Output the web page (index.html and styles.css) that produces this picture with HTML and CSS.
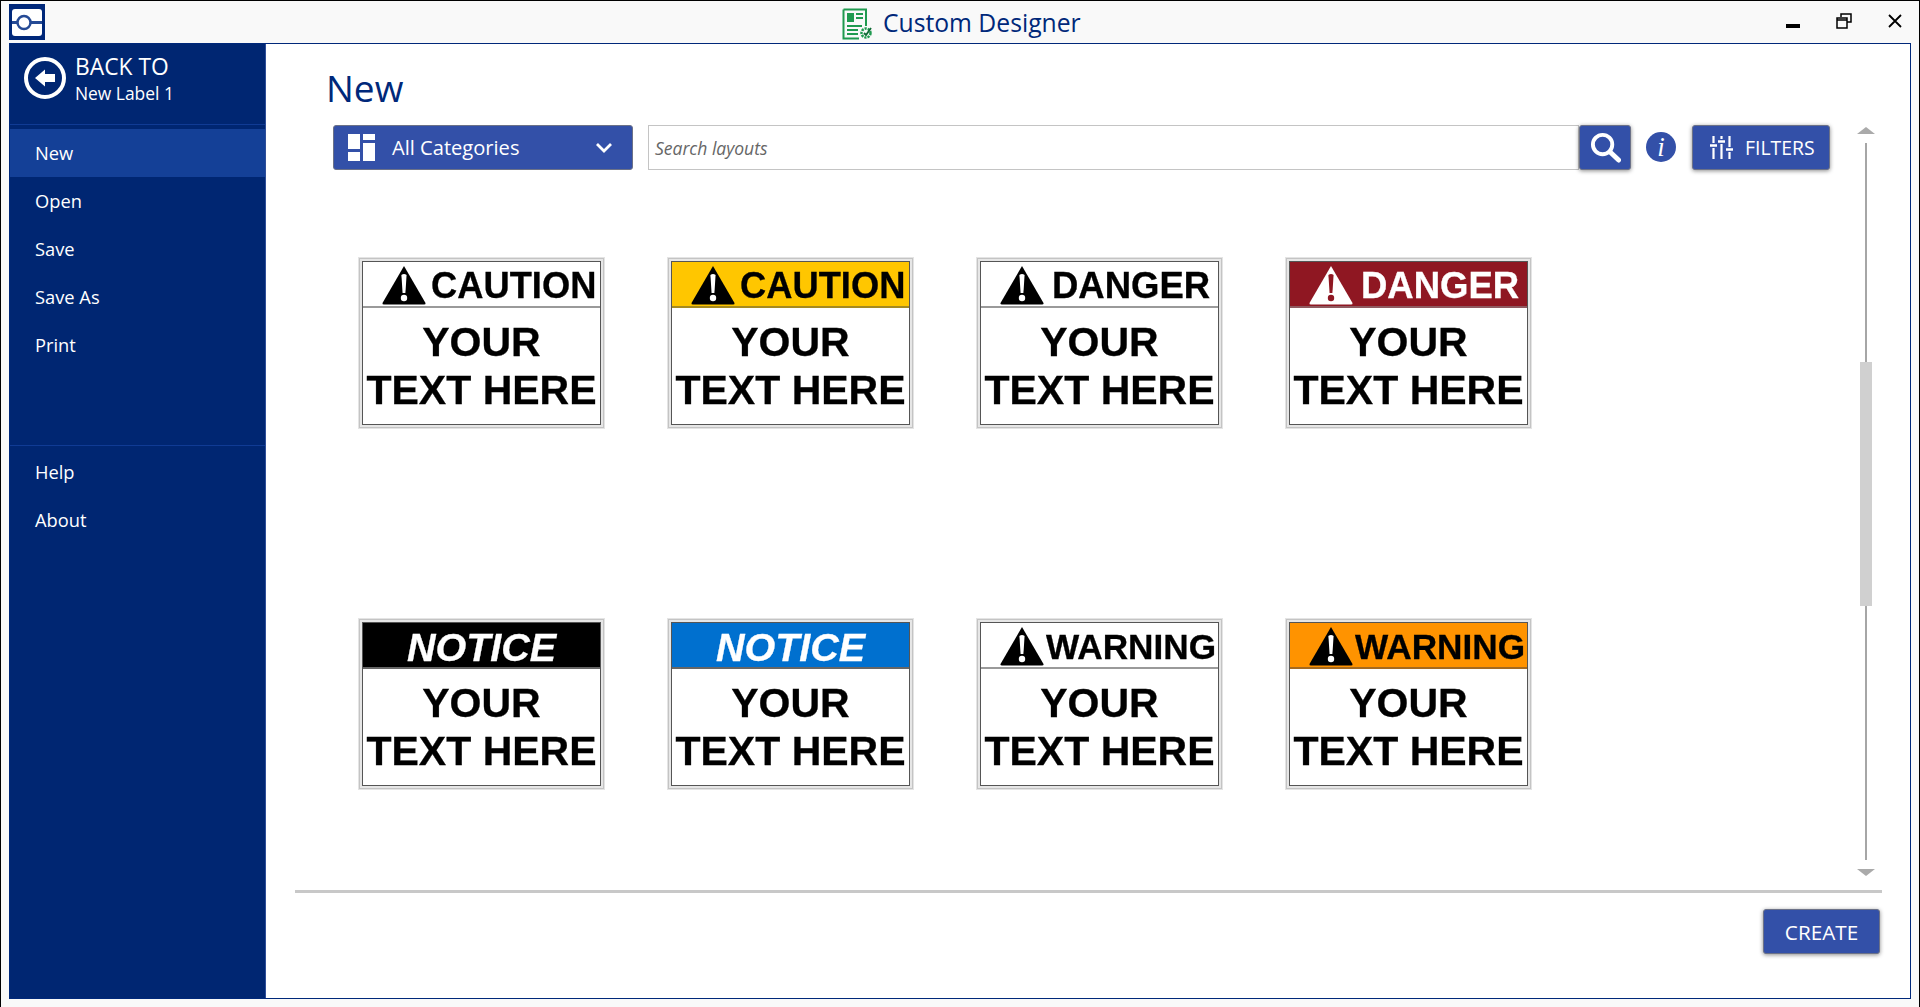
FILE: index.html
```html
<!DOCTYPE html>
<html lang="en">
<head>
<meta charset="utf-8">
<title>Custom Designer</title>
<link rel="stylesheet" href="styles.css">
</head>
<body>
<svg class="defs" width="0" height="0" aria-hidden="true">
  <symbol id="tri" viewBox="0 0 44 40">
    <path class="tri-body" d="M22 1 L43.500 38 Q44 39.500 42 39.500 L2 39.500 Q0 39.500 .5 38 Z"/>
    <path class="tri-mark" d="M19.400 10 Q22 8 24.600 10 L23.400 28 L20.600 28 Z"/>
    <circle class="tri-mark" cx="22" cy="33" r="3.200"/>
  </symbol>
</svg>
<div class="window">
  <header class="titlebar">
    <svg class="logo" viewBox="0 0 36 36">
      <rect width="36" height="36" fill="#00287a"/>
      <rect x="3" y="5" width="30" height="27" rx="3" fill="#fff"/>
      <path d="M3 18.500H33" stroke="#254a95" stroke-width="3"/>
      <circle cx="15" cy="18.500" r="6.500" fill="#fff" stroke="#254a95" stroke-width="2.500"/>
    </svg>
    <div class="title">
      <svg class="title-icon" viewBox="0 0 32 32">
        <path d="M1.500 1.500H24V18M17 30.500H1.500V1.500" fill="none" stroke="#1f9a4f" stroke-width="2"/>
        <rect x="5" y="5" width="7" height="9" fill="#1f9a4f"/>
        <path d="M14 6H21M14 10H21M5 18H20M5 22H16M5 26H16" stroke="#1f9a4f" stroke-width="2"/>
        <circle cx="24" cy="25" r="4.500" fill="none" stroke="#1f9a4f" stroke-width="2.500" stroke-dasharray="2.200 1"/>
        <path d="M22 25L24 27L29 20" fill="none" stroke="#0f6b35" stroke-width="1.800"/>
      </svg>
      <span class="title-text">Custom Designer</span>
    </div>
    <div class="win-controls">
      <svg class="win-btn" viewBox="0 0 16 16"><rect x="1" y="11" width="14" height="4" fill="#000"/></svg>
      <svg class="win-btn" viewBox="0 0 16 16"><path d="M5 4V1H15V9H11M1 5H11V15H1Z M1 7H11" fill="none" stroke="#000" stroke-width="1.500"/></svg>
      <svg class="win-btn" viewBox="0 0 16 16"><path d="M2 2L14 14M14 2L2 14" stroke="#000" stroke-width="1.800"/></svg>
    </div>
  </header>

  <div class="frame">
    <nav class="sidebar">
      <div class="back">
        <svg class="back-icon" viewBox="0 0 42 42">
          <circle cx="21" cy="21" r="19" fill="none" stroke="#fff" stroke-width="4"/>
          <path d="M11 21L21 12.500V17H31V25H21V29.500Z" fill="#fff"/>
        </svg>
        <div class="back-text">
          <div class="back-top">BACK TO</div>
          <div class="back-sub">New Label 1</div>
        </div>
      </div>
      <ul class="menu">
        <li class="menu-item selected">New</li>
        <li class="menu-item">Open</li>
        <li class="menu-item">Save</li>
        <li class="menu-item">Save As</li>
        <li class="menu-item">Print</li>
      </ul>
      <ul class="menu menu-lower">
        <li class="menu-item">Help</li>
        <li class="menu-item">About</li>
      </ul>
    </nav>

    <main class="main">
      <div class="upper">
        <div class="content">
          <h1 class="page-title">New</h1>
          <div class="toolbar">
            <div class="btn dropdown">
              <svg class="cat-icon" viewBox="0 0 27 27" fill="#fff">
                <rect width="12" height="15"/><rect x="15" width="12" height="6"/><rect y="18" width="12" height="9"/><rect x="15" y="9" width="12" height="18"/>
              </svg>
              <span class="dropdown-label">All Categories</span>
              <svg class="chev" viewBox="0 0 18 12"><path d="M2 2L9 9L16 2" fill="none" stroke="#fff" stroke-width="2.800"/></svg>
            </div>
            <div class="search">
              <span class="search-text">Search layouts</span>
            </div>
            <div class="btn search-btn">
              <svg class="search-icon" viewBox="0 0 32 32"><circle cx="13" cy="13" r="10" fill="none" stroke="#fff" stroke-width="4"/><path d="M20.500 20.500L29.500 29" stroke="#fff" stroke-width="5" stroke-linecap="round"/></svg>
            </div>
            <div class="info">i</div>
            <div class="btn filters">
              <svg class="filter-icon" viewBox="0 0 23 23">
                <path d="M3.500 0V7M3.500 12V23M11.500 0V3M11.500 8V23M19.500 0V11M19.500 16V23" stroke="#fff" stroke-width="2.200"/>
                <path d="M0 9.500H7M8 5.500H15M16 13.500H23" stroke="#fff" stroke-width="2.400"/>
              </svg>
              <span>FILTERS</span>
            </div>
          </div>
          <div class="grid">
            <div class="card"><div class="sign">
              <div class="sign-head icon-head gap-c"><svg class="tri"><use href="#tri"/></svg><span class="word">CAUTION</span></div>
              <div class="sign-body">YOUR<br>TEXT HERE</div>
            </div></div>
            <div class="card"><div class="sign">
              <div class="sign-head icon-head gap-c yellow"><svg class="tri"><use href="#tri"/></svg><span class="word">CAUTION</span></div>
              <div class="sign-body">YOUR<br>TEXT HERE</div>
            </div></div>
            <div class="card"><div class="sign">
              <div class="sign-head icon-head gap-d"><svg class="tri"><use href="#tri"/></svg><span class="word">DANGER</span></div>
              <div class="sign-body">YOUR<br>TEXT HERE</div>
            </div></div>
            <div class="card"><div class="sign">
              <div class="sign-head icon-head gap-d red"><svg class="tri"><use href="#tri"/></svg><span class="word">DANGER</span></div>
              <div class="sign-body">YOUR<br>TEXT HERE</div>
            </div></div>
            <div class="card"><div class="sign">
              <div class="sign-head notice black"><span class="word">NOTICE</span></div>
              <div class="sign-body">YOUR<br>TEXT HERE</div>
            </div></div>
            <div class="card"><div class="sign">
              <div class="sign-head notice blue"><span class="word">NOTICE</span></div>
              <div class="sign-body">YOUR<br>TEXT HERE</div>
            </div></div>
            <div class="card"><div class="sign">
              <div class="sign-head icon-head gap-w"><svg class="tri"><use href="#tri"/></svg><span class="word">WARNING</span></div>
              <div class="sign-body">YOUR<br>TEXT HERE</div>
            </div></div>
            <div class="card"><div class="sign">
              <div class="sign-head icon-head gap-w orange"><svg class="tri"><use href="#tri"/></svg><span class="word">WARNING</span></div>
              <div class="sign-body">YOUR<br>TEXT HERE</div>
            </div></div>
          </div>
        </div>
        <div class="scrollbar">
          <div class="arrow-up"></div>
          <div class="track"><div class="thumb"></div></div>
          <div class="arrow-down"></div>
        </div>
      </div>
      <div class="rule"></div>
      <div class="footer"><div class="btn create">CREATE</div></div>
    </main>
  </div>
</div>
</body>
</html>
```
FILE: styles.css
```css
* { box-sizing: border-box; }
html, body { margin: 0; padding: 0; height: 100%; }
body { font-family: "Open Sans", "Noto Sans", sans-serif; background: #f9f9f9; overflow: hidden; }
.defs { display: block; width: 0; height: 0; }

.window {
  width: 1920px; height: 1007px;
  display: flex; flex-direction: column;
  border-top: 1px solid #000; border-left: 1px solid #000; border-right: 1px solid #000;
  background: #f9f9f9;
}

.titlebar { height: 42px; display: flex; align-items: center; padding-left: 8px; position: relative; flex: none; }
.logo { width: 36px; height: 36px; display: block; }
.title { position: absolute; left: 841px; top: 6px; display: flex; align-items: center; gap: 9px; }
.title-icon { width: 32px; height: 32px; display: block; }
.title-text { font-size: 24.700px; color: #00287a; line-height: 32px; margin-bottom: 2px; }
.win-controls { margin-left: auto; display: flex; gap: 35px; padding-right: 16px; margin-top: -2px; }
.win-btn { width: 16px; height: 16px; display: block; }

.frame {
  flex: none; width: 1902px; height: 956px; margin-left: 8px;
  border: 1.500px solid #00287a; display: flex; background: #fff;
}
.sidebar { width: 256px; flex: none; background: #002672; border-right: 1px solid #2f4f99; color: #fff; display: flex; flex-direction: column; }
.back { height: 81px; border-bottom: 1px solid #103b94; display: flex; padding: 13px 0 0 14px; gap: 9px; flex: none; }
.back-icon { width: 42px; height: 42px; display: block; flex: none; }
.back-text { margin-top: -4px; }
.back-top { font-size: 22.800px; line-height: 28px; }
.back-sub { font-size: 17.400px; line-height: 24px; margin-top: 0; }
.menu { list-style: none; margin: 4px 0 0; padding: 0; }
.menu-lower { margin-top: 76px; border-top: 1px solid #103b94; padding-top: 2px; }
.menu-item { height: 48px; line-height: 48px; padding-left: 25px; font-size: 18.300px; }
.menu-item.selected { background: #144097; }

.main { flex: 1; min-width: 0; display: flex; flex-direction: column; }
.upper { display: flex; height: 846px; flex: none; }
.content { width: 1568px; padding-left: 60px; flex: none; }
.page-title { margin: 0; font-weight: 400; font-size: 37px; line-height: 50px; color: #00287a; padding-top: 19px; height: 81px; }
.toolbar { display: flex; align-items: stretch; height: 45px; margin-left: 7px; width: 1497px; }
.btn {
  background: #3350a8; color: #fff; border: 1px solid #6c7288; border-radius: 3px;
  display: flex; align-items: center; box-shadow: 0 1px 4px rgba(0,0,0,.45);
}
.dropdown { width: 300px; padding-left: 14px; box-shadow: none; border-width: 1.500px; }
.cat-icon { width: 27px; height: 27px; flex: none; }
.dropdown-label { font-size: 20.100px; margin-left: 17px; }
.chev { width: 18px; height: 12px; margin-left: auto; margin-right: 19px; }
.search { width: 931px; margin-left: 15px; border: 1.500px solid #c4c4c4; display: flex; align-items: center; padding-left: 6px; }
.search-text { font-style: italic; font-size: 17.500px; color: #666; }
.search-btn { width: 52px; justify-content: center; }
.search-icon { width: 31px; height: 31px; }
.info {
  width: 30px; height: 30px; border-radius: 50%; background: #3350a8; color: #fff;
  font: italic 400 27px/30px "Liberation Serif", serif; text-align: center;
  margin: 7px 16px 0 15px; flex: none;
}
.filters { width: 138px; padding-left: 17px; gap: 12px; font-size: 19.400px; }
.filter-icon { width: 23px; height: 23px; flex: none; }

.grid {
  display: grid; grid-template-columns: repeat(4, 245px); column-gap: 64px; row-gap: 191px;
  margin: 88px 0 0 33px;
}
.card { height: 170px; border: 1px solid #c4c4c4; outline: 1px solid #e4e4e4; padding: 2px; background: #e6e6e6; }
.sign { height: 100%; border: 1px solid #555; background: #fff; font-family: "Liberation Sans", Arial, sans-serif; font-weight: 700; color: #000; display: flex; flex-direction: column; filter: blur(.35px); -webkit-text-stroke: .3px currentColor; }
.sign-head { height: 46px; flex: none; display: flex; align-items: center; border-bottom: 2px solid #9a9a9a; overflow: hidden; white-space: nowrap; --mark: #fff; --body: #000; }
.icon-head { padding-left: 19px; }
.word { line-height: 44px; padding-top: 4px; }
.gap-c .word { font-size: 36.300px; margin-left: 5px; }
.gap-d .word { font-size: 36.500px; margin-left: 8px; }
.gap-w .word { font-size: 35.200px; margin-left: 2px; }
.yellow { background: #ffc600; border-bottom-color: #a58a20; }
.red { background: #8f1722; color: #fff; border-bottom-color: #8f5a60; --mark: #8f1722; --body: #fff; }
.orange { background: #ff9300; border-bottom-color: #a56a20; }
.notice { justify-content: center; font-style: italic; color: #fff; border-bottom-color: #666; }
.notice .word { font-size: 39.500px; }
.black { background: #000; }
.blue { background: #0070cf; }
.tri { width: 44px; height: 40px; flex: none; margin-top: 2px; }
.tri-body { fill: var(--body); }
.tri-mark { fill: var(--mark); }
.sign-body { font-size: 41px; line-height: 47.500px; text-align: center; padding-top: 11px; }

.scrollbar { width: 64px; display: flex; flex-direction: column; align-items: center; padding-top: 83px; flex: none; }
.arrow-up { width: 0; height: 0; border-left: 9px solid transparent; border-right: 9px solid transparent; border-bottom: 7px solid #aaa; flex: none; }
.track { position: relative; width: 2px; height: 717px; margin: 9px 0; background: #a6a6a6; flex: none; }
.thumb { position: absolute; left: -5px; top: 219px; width: 12px; height: 244px; background: #d0d0d0; }
.arrow-down { width: 0; height: 0; border-left: 9px solid transparent; border-right: 9px solid transparent; border-top: 7px solid #aaa; flex: none; }

.rule { height: 3px; background: #c8c8c8; margin: 0 28px 0 29px; flex: none; }
.footer { display: flex; justify-content: flex-end; padding: 16px 30px 0 0; }
.create { width: 117px; height: 45px; justify-content: center; font-size: 20.700px; }
```
